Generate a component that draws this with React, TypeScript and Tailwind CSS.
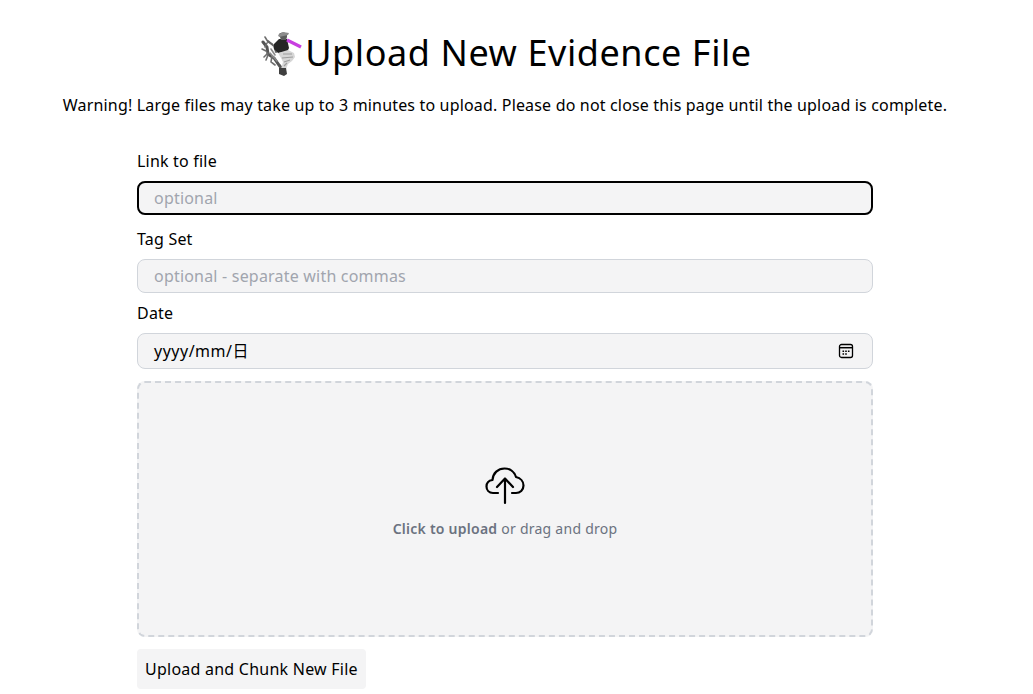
function Logo() {
  return (
    <svg width="44" height="48" viewBox="0 0 44 48" className="shrink-0">
      <g fill="none" strokeLinecap="round">
        <path d="M2 13 L6 18 L7 25 L13 29 L18 36 L21 40" strokeWidth="3" stroke="#555" />
        <path d="M4 8 L7 13 L11 15 M3 28 L7 24 M1 20 L5 22 M7 26 L5 31 M11 27 L10 33 L14 36 M6 14 L4 18" strokeWidth="1.6" stroke="#6e6e6e" />
        <path d="M7 12 L13 17 L15 23" strokeWidth="2" stroke="#666" />
        <path d="M10 20 L14 26 M9 24 L16 32" strokeWidth="1.6" stroke="#8a8a8a" />
      </g>
      <path d="M13 15 L18 10 L26 10 L28 19 L26 23 L17 24 L13 20 Z" fill="#262626" />
      <path d="M18 5 C20 3 24 3 26 5 L26 8 L25 11 L20 11 L19 8 Z" fill="#5c5c5c" />
      <path d="M17 6 L22 3 L28 4 L27 6 L18 8 Z" fill="#8c8c8c" />
      <path d="M17 24 L27 21 L33 24 L34 28 L31 32 L27 35 L25 40 L20 40 L22 33 L20 29 Z" fill="#d6d6d6" />
      <path d="M22 25 L31 25 M21 29 L32 28 M23 33 L29 31 M23 37 L26 34" stroke="#9c9c9c" strokeWidth="1.2" fill="none" />
      <path d="M18 39 L25 39 L26 45 L23 47 L18 45 Z" fill="#3f3f3f" />
      <path d="M26 11 L40 18" stroke="#c83fe0" strokeWidth="3.2" fill="none" />
    </svg>
  );
}

function CalendarIcon() {
  return (
    <svg width="16" height="16" viewBox="0 0 16 16" fill="none">
      <rect x="1.5" y="1.5" width="13" height="13" rx="2" stroke="#000" strokeWidth="1.3" />
      <path d="M1.5 4.7 H14.5" stroke="#000" strokeWidth="1.5" />
      <path d="M4.5 7.5h1.6v1.6H4.5zM7.2 7.5h1.6v1.6H7.2zM9.9 7.5h1.6v1.6H9.9zM4.5 10.2h1.6v1.6H4.5zM7.2 10.2h1.6v1.6H7.2z" fill="#000" />
    </svg>
  );
}

function CloudIcon() {
  return (
    <svg width="40" height="40" viewBox="0 0 40 40" fill="none" stroke="#000" strokeWidth="2.2" strokeLinecap="round" strokeLinejoin="round">
      <path d="M13 28 H8 C4 28 1.5 25 1.5 21.5 C1.5 18 4 15.5 7.5 15 C8 8 13 3.5 19.5 3.5 C25 3.5 29.5 7 31 12 C35.5 13 38.5 16.5 38.5 20.5 C38.5 25 35 28 31 28 H27" />
      <path d="M20 38 V13.5 M12 22 L20 13.5 L28 22" />
    </svg>
  );
}

export default function App() {
  return (
    <div className="w-[1010px] h-[694px] overflow-hidden bg-white text-black tracking-[0.2px] font-['Noto_Sans','Noto_Sans_CJK_SC',sans-serif]">
      <div className="flex items-center justify-center pt-[28px] h-[78px] pl-[3px]">
        <Logo />
        <h1 className="text-[36px] leading-[50px] tracking-[0.58px]">Upload New Evidence File</h1>
      </div>
      <p className="text-center text-base leading-[24px] mt-[15px] tracking-[0.17px]">
        Warning! Large files may take up to 3 minutes to upload. Please do not close this page until the upload is complete.
      </p>
      <form className="w-[736px] mx-auto mt-[32px] flex flex-col">
        <label className="text-base leading-[24px] h-[24px]">Link to file</label>
        <input
          placeholder="optional"
          className="mt-[8px] h-[34px] rounded-lg border-2 border-black bg-[#f4f4f5] px-[15px] text-base tracking-[0.2px] outline-none placeholder:text-[#a1a5ae]"
        />
        <label className="text-base leading-[24px] h-[24px] mt-[12px]">Tag Set</label>
        <input
          placeholder="optional - separate with commas"
          className="mt-[8px] h-[34px] rounded-lg border border-[#d1d5db] bg-[#f4f4f5] px-[16px] text-base tracking-[0.2px] outline-none placeholder:text-[#a1a5ae]"
        />
        <label className="text-base leading-[24px] h-[24px] mt-[8px]">Date</label>
        <div className="mt-[8px] h-[36px] rounded-lg border border-[#d1d5db] bg-[#f4f4f5] px-[16px] text-base flex items-center justify-between">
          <span className="tracking-[0.5px]">yyyy/mm/日</span>
          <span className="mr-[2px]"><CalendarIcon /></span>
        </div>
        <div className="mt-[12px] h-[256px] rounded-lg border-2 border-dashed border-[#d1d5db] bg-[#f4f4f5] flex flex-col items-center justify-center pb-[14px]">
          <CloudIcon />
          <p className="mt-[14px] text-sm leading-[20px] text-[#6b7280] tracking-[0.25px]">
            <span className="font-semibold">Click to upload</span> or drag and drop
          </p>
        </div>
        <div className="mt-[12px]">
          <button type="button" className="h-[40px] px-[8px] rounded bg-[#f4f4f5] text-base tracking-[0.24px]">Upload and Chunk New File</button>
        </div>
      </form>
    </div>
  );
}
